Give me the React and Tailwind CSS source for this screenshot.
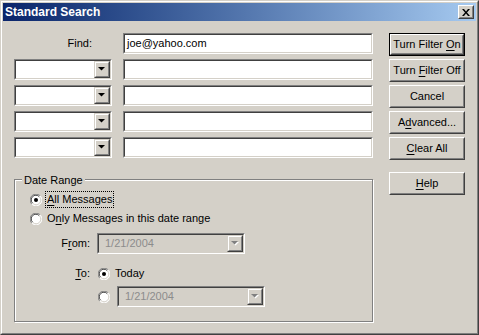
import React from "react"

const U = ({ children }) => <span className="underline underline-offset-[2px]">{children}</span>

function Sunken({ className = "", inner = "bg-white", children }) {
    return (
        <div className={`border border-t-[#808080] border-l-[#808080] border-b-white border-r-white ${className}`}>
            <div className={`h-full border border-t-[#404040] border-l-[#404040] border-b-[#d4d0c8] border-r-[#d4d0c8] flex items-center ${inner}`}>
                {children}
            </div>
        </div>
    )
}

function Arrow({ disabled }) {
    return (
        <div className="w-[16px] h-full border border-t-[#d4d0c8] border-l-[#d4d0c8] border-b-[#404040] border-r-[#404040] bg-[#d4d0c8]">
            <div className="h-full border border-t-white border-l-white border-b-[#808080] border-r-[#808080] flex items-center justify-center">
                <svg width="8" height="5" viewBox="0 0 8 5">
                    {disabled && <path d="M1 1h7L4.5 4.5z" fill="#fff" />}
                    <path d="M0 0h7L3.5 3.5z" fill={disabled ? "#808080" : "#000"} />
                </svg>
            </div>
        </div>
    )
}

function Combo({ className = "", value, disabled }) {
    return (
        <Sunken className={className} inner={disabled ? "bg-[#d4d0c8]" : "bg-white"}>
            <div className={`flex-1 pl-[6px] ${disabled ? "text-[#8c8c8c]" : ""}`}>{value}</div>
            <Arrow disabled={disabled} />
        </Sunken>
    )
}

function Button({ children, isDefault }) {
    return (
        <div className={`w-[76px] h-[23px] ${isDefault ? "border border-black" : ""}`}>
            <div className="h-full border border-t-white border-l-white border-b-[#404040] border-r-[#404040]">
                <div className="h-full border border-t-[#d4d0c8] border-l-[#d4d0c8] border-b-[#808080] border-r-[#808080] flex items-center justify-center">
                    <span>{children}</span>
                </div>
            </div>
        </div>
    )
}

function Radio({ checked }) {
    return (
        <svg width="12" height="12" viewBox="0 0 12 12" className="shrink-0">
            <circle cx="6" cy="6" r="5.5" fill="#fff" />
            <path d="M10.2 1.8A5.5 5.5 0 0 0 1.8 10.2" stroke="#808080" strokeWidth="1" fill="none" />
            <path d="M9.2 2.6A4.4 4.4 0 0 0 2.6 9.2" stroke="#404040" strokeWidth="1" fill="none" />
            <path d="M1.8 10.2A5.5 5.5 0 0 0 10.2 1.8" stroke="#fff" strokeWidth="1" fill="none" />
            <path d="M2.8 9.4A4.4 4.4 0 0 0 9.4 2.8" stroke="#d4d0c8" strokeWidth="1" fill="none" />
            {checked && <circle cx="6" cy="6" r="2" fill="#000" />}
        </svg>
    )
}

export default function App() {
    return (
        <div className="w-[479px] h-[335px] bg-[#d4d0c8] border border-t-[#d4d0c8] border-l-[#d4d0c8] border-b-[#404040] border-r-[#404040] font-['Liberation_Sans',Arial,sans-serif] text-[11px] text-black">
            <div className="h-full border border-t-white border-l-white border-b-[#808080] border-r-[#808080] p-px flex flex-col">
                <div className="h-[18px] flex items-center justify-between bg-gradient-to-r from-[#0a246a] to-[#a6caf0] pl-[2px] pr-[2px]">
                    <span className="text-white font-bold text-[12px]">Standard Search</span>
                    <div className="w-[16px] h-[14px] border border-t-white border-l-white border-b-[#404040] border-r-[#404040] bg-[#d4d0c8]">
                        <div className="h-full border border-t-[#d4d0c8] border-l-[#d4d0c8] border-b-[#808080] border-r-[#808080] flex items-center justify-center">
                            <svg width="8" height="7" viewBox="0 0 8 7">
                                <path d="M0 0h2l2 2.5L6 0h2L5 3.5 8 7H6L4 4.5 2 7H0l3-3.5z" fill="#000" />
                            </svg>
                        </div>
                    </div>
                </div>

                <div className="flex pl-[11px] pt-[12px]">
                    <div className="w-[359px] flex flex-col">
                        <div className="flex flex-col gap-[5px]">
                            <div className="flex h-[21px] gap-[11px]">
                                <div className="w-[98px] text-right pr-[20px] leading-[21px]">Find:</div>
                                <Sunken className="w-[250px]">
                                    <span className="pl-[2px]">joe@yahoo.com</span>
                                </Sunken>
                            </div>
                            {[0, 1, 2, 3].map((i) => (
                                <div key={i} className="flex h-[21px] gap-[11px]">
                                    <Combo className="w-[98px]" />
                                    <Sunken className="w-[250px]" />
                                </div>
                            ))}
                        </div>

                        <div className="relative mt-[21px] h-[143px] border border-[#808080] shadow-[inset_1px_1px_0_#fff,1px_1px_0_#fff] pl-[15px] pt-[10px]">
                            <span className="absolute left-[7px] top-[-8px] px-[2px] bg-[#d4d0c8]">Date Range</span>
                            <div className="flex items-center h-[19px] gap-[3px]">
                                <Radio checked />
                                <span className="border border-dotted border-black px-px leading-[15px]">
                                    <U>A</U>ll Messages
                                </span>
                            </div>
                            <div className="flex items-center h-[19px] gap-[5px]">
                                <Radio />
                                <span>O<U>n</U>ly Messages in this date range</span>
                            </div>
                            <div className="flex items-center h-[21px] mt-[5px]">
                                <div className="w-[62px] text-right pr-[2px]">F<U>r</U>om:</div>
                                <Combo className="w-[148px] h-[21px] ml-[5px]" value="1/21/2004" disabled />
                            </div>
                            <div className="flex items-center h-[19px] mt-[10px]">
                                <div className="w-[62px] text-right pr-[2px]"><U>T</U>o:</div>
                                <div className="ml-[6px]"><Radio checked /></div>
                                <span className="ml-[5px]">Today</span>
                            </div>
                            <div className="flex items-center h-[21px] mt-[3px]">
                                <div className="w-[62px]" />
                                <div className="ml-[6px]"><Radio /></div>
                                <Combo className="w-[148px] h-[21px] ml-[7px]" value="1/21/2004" disabled />
                            </div>
                        </div>
                    </div>

                    <div className="ml-[16px] flex flex-col gap-[3px]">
                        <Button isDefault>Turn Filter <U>O</U>n</Button>
                        <Button>Turn <U>F</U>ilter Off</Button>
                        <Button>Cancel</Button>
                        <Button>A<U>d</U>vanced...</Button>
                        <Button><U>C</U>lear All</Button>
                        <div className="mt-[9px]">
                            <Button><U>H</U>elp</Button>
                        </div>
                    </div>
                </div>
            </div>
        </div>
    )
}
